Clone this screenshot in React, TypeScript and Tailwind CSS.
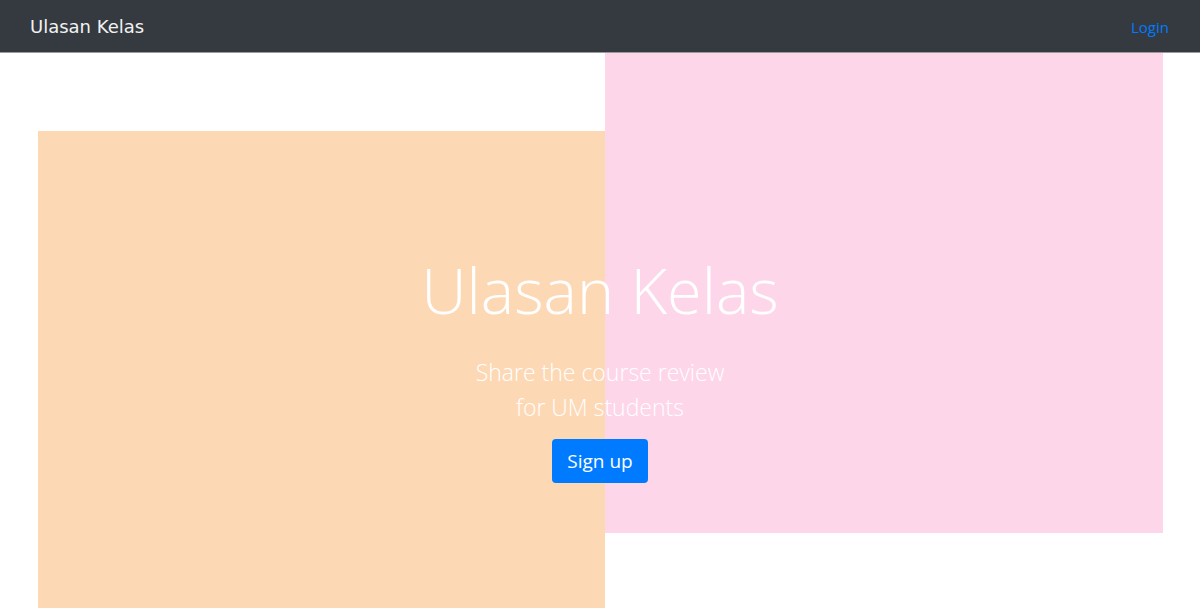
import React from "react";

const App: React.FC = () => {
  return (
    <div className="min-h-screen bg-white font-['Open_Sans',sans-serif]">
      {/* top navbar */}
      <nav className="flex h-[53px] items-center justify-between border-b border-[#9a9a9a] bg-[#343a40] pl-[30px] pr-[31px]">
        <span className="font-['DejaVu_Sans',sans-serif] text-[18px] text-[#f2f2f2]">Ulasan Kelas</span>
        <a href="#" className="mt-[3px] text-[15px] text-[#007bff]">
          Login
        </a>
      </nav>

      {/* hero */}
      <section className="relative h-[555px] overflow-hidden">
        <div className="absolute left-[38px] top-[78px] h-[500px] w-[567px] bg-[#fdd8b5]" />
        <div className="absolute left-[605px] top-0 h-[480px] w-[558px] bg-[#fdd6ea]" />

        <div className="relative flex flex-col items-center pt-[194px] text-center text-white">
          <h1 className="text-[63px] font-light leading-[86px]">Ulasan Kelas</h1>
          <p className="mt-[22px] text-[23px] font-light leading-[35px]">
            Share the course review
            <br />
            for UM students
          </p>
          <button className="mt-[14px] h-[44px] rounded-[4px] bg-[#007bff] px-[15px] text-[19px] text-white">
            Sign up
          </button>
        </div>
      </section>
    </div>
  );
};

export default App;
